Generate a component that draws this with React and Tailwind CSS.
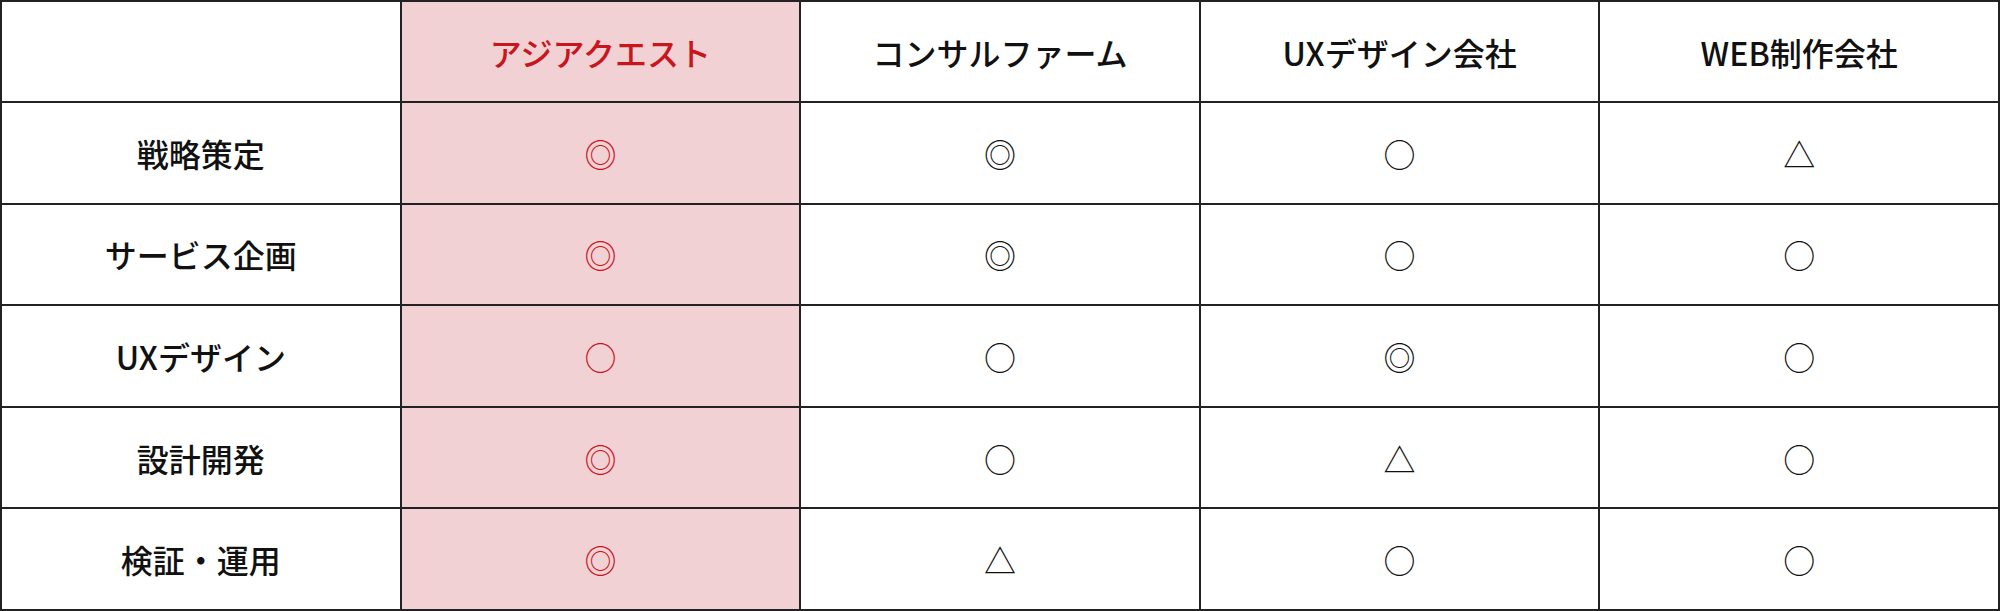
import React from "react";

const columns = ["アジアクエスト", "コンサルファーム", "UXデザイン会社", "WEB制作会社"];

const rows = [
  { label: "戦略策定", marks: ["◎", "◎", "○", "△"] },
  { label: "サービス企画", marks: ["◎", "◎", "○", "○"] },
  { label: "UXデザイン", marks: ["○", "○", "◎", "○"] },
  { label: "設計開発", marks: ["◎", "○", "△", "○"] },
  { label: "検証・運用", marks: ["◎", "△", "○", "○"] },
];

const font = {
  fontFamily: '"Noto Sans CJK JP", "Noto Sans", sans-serif',
};

export default function App() {
  return (
    <div className="w-[2000px] h-[611px] bg-white" style={font}>
      <table className="w-full h-full table-fixed border-collapse border-2 border-[#222]">
        <thead>
          <tr className="h-[101px]">
            <th className="border-2 border-[#222] bg-white"></th>
            {columns.map((c, i) => (
              <th
                key={c}
                className={
                  i === 0
                    ? "border-2 border-[#222] bg-[#f2d1d4] text-[#c8161e] text-[32px] font-medium"
                    : "border-2 border-[#222] text-[#111] text-[32px] font-medium"
                }
              >
                {c}
              </th>
            ))}
          </tr>
        </thead>
        <tbody>
          {rows.map((r) => (
            <tr key={r.label} className="h-[101px]">
              <td className="border-2 border-[#222] text-center text-[32px] font-medium text-[#111]">
                {r.label}
              </td>
              {r.marks.map((m, i) => (
                <td
                  key={i}
                  className={
                    i === 0
                      ? "border-2 border-[#222] bg-[#f2d1d4] text-center text-[32px] text-[#c8161e]"
                      : "border-2 border-[#222] text-center text-[32px] text-[#111]"
                  }
                >
                  {m}
                </td>
              ))}
            </tr>
          ))}
        </tbody>
      </table>
    </div>
  );
}
